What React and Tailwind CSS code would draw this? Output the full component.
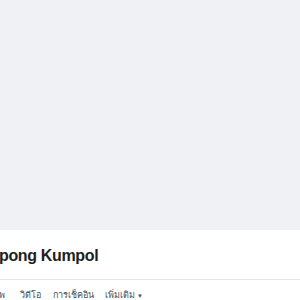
export default function App() {
  return (
    <div className="w-[300px] h-[300px] overflow-hidden bg-white" style={{ fontFamily: '"Liberation Sans", "Noto Sans", sans-serif' }}>
      <div className="h-[230px] bg-[#f0f1f5]" />
      <div className="h-[50px] border-b border-[#e5e5e5] flex items-center pt-[2px]">
        <h1 className="-ml-[1px] text-[16px] font-bold text-[#1c1e21] whitespace-nowrap leading-none tracking-[-0.35px]">pong Kumpol</h1>
      </div>
      <div className="flex items-center pt-[11px] text-[9px] text-[#4b4f56] whitespace-nowrap leading-none -ml-[24px]">
        <span className="w-[44px] shrink-0 text-right pr-[15px]">รูปภาพ</span>
        <span className="w-[33px] shrink-0">วิดีโอ</span>
        <span className="w-[52px] shrink-0">การเช็คอิน</span>
        <span className="flex items-center gap-[2px]">เพิ่มเติม <span className="text-[6px]">▼</span></span>
      </div>
    </div>
  );
}
